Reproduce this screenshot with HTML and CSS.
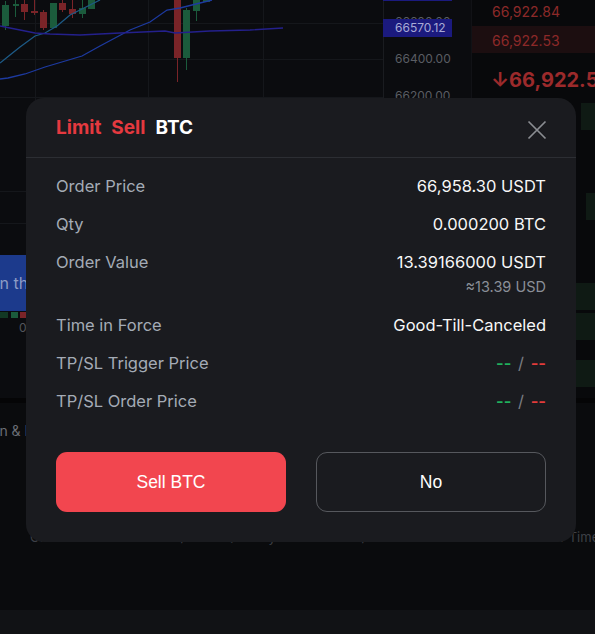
FILE: index.html
```html
<!DOCTYPE html>
<html lang="en">
<head>
    <meta charset="UTF-8">
    <meta name="viewport" content="width=device-width, initial-scale=1.0">
    <title>Confirm Order</title>
    <link rel="stylesheet" href="styles.css">
</head>
<body>
    <div class="app">
        <div class="market">
            <div class="chart">
                <svg class="candles" width="383" height="320" viewBox="0 0 383 320">
                    <g class="grid">
                        <line x1="0" y1="23.5" x2="383" y2="23.5"/>
                        <line x1="0" y1="59.5" x2="383" y2="59.5"/>
                        <line x1="0" y1="97.5" x2="383" y2="97.5"/>
                        <line x1="0" y1="191.5" x2="383" y2="191.5"/>
                        <line x1="0" y1="223.5" x2="383" y2="223.5"/>
                        <line x1="35.5" y1="0" x2="35.5" y2="320"/>
                        <line x1="148.5" y1="0" x2="148.5" y2="320"/>
                        <line x1="263.5" y1="0" x2="263.5" y2="320"/>
                    </g>
                    <g class="up">
                        <line x1="5.5" y1="1" x2="5.5" y2="30"/><rect x="2" y="5" width="7" height="21"/>
                        <line x1="15.5" y1="0" x2="15.5" y2="17"/><rect x="13" y="4" width="6" height="2"/>
                        <rect x="50" y="3" width="7" height="25"/>
                        <line x1="82.5" y1="0" x2="82.5" y2="18"/><rect x="79" y="8" width="7" height="6"/>
                        <rect x="88" y="0" width="7" height="9"/>
                        <line x1="186.5" y1="8" x2="186.5" y2="70"/><rect x="183" y="10" width="7" height="48"/>
                        <line x1="196.5" y1="0" x2="196.5" y2="21"/><rect x="193" y="0" width="7" height="11"/>
                        <rect x="203" y="0" width="7" height="2"/>
                    </g>
                    <g class="down">
                        <line x1="24.5" y1="0" x2="24.5" y2="20"/><rect x="21" y="4" width="7" height="8"/>
                        <line x1="34.5" y1="0" x2="34.5" y2="15"/><rect x="31" y="11" width="7" height="2"/>
                        <line x1="43.5" y1="10" x2="43.5" y2="30"/><rect x="40" y="12" width="7" height="16"/>
                        <line x1="62.5" y1="0" x2="62.5" y2="12"/><rect x="59" y="3" width="7" height="7"/>
                        <line x1="72.5" y1="0" x2="72.5" y2="18"/><rect x="69" y="9" width="7" height="5"/>
                        <line x1="177.5" y1="0" x2="177.5" y2="82"/><rect x="174" y="0" width="7" height="58"/>
                    </g>
                    <polyline class="ma ma-short" points="0,63 10,55 20,47 35,36 45,33 57,26 70,15 90,5 100,0"/>
                    <polyline class="ma ma-mid" points="0,79 8,78 25,74 45,67 82,56 100,46 130,30 150,22 167,10 180,8 200,3 212,0"/>
                    <polyline class="ma ma-long" points="0,26 10,28 35,33 50,34 80,35 120,33 165,31 175,33 210,31 250,30 283,28"/>
                    <rect class="vol-up-dim" x="0" y="312" width="8" height="6"/>
                    <rect class="vol-up" x="11" y="312" width="7" height="6"/>
                    <rect class="vol-down" x="20" y="312" width="6" height="6"/>
                </svg>
                <div class="time-axis">
                    <span>06:00</span>
                    <span>12:00</span>
                    <span>18:00</span>
                </div>
                <div class="banner">Join the community</div>
            </div>
            <div class="price-axis">
                <span class="tick">66600.00</span>
                <span class="tick">66400.00</span>
                <span class="tick">66200.00</span>
                <span class="tick">66000.00</span>
                <span class="mark mark-top">66800.00</span>
                <span class="mark">66570.12</span>
            </div>
            <div class="book">
                <div class="ask">66,922.84</div>
                <div class="ask ask-hl">66,922.53</div>
                <div class="last">&#8595;66,922.53</div>
                <div class="bid"><span class="depth" style="width:22%"></span>66,922.50</div>
                <div class="bid"><span class="depth" style="width:0%"></span>66,922.41</div>
                <div class="bid"><span class="depth" style="width:0%"></span>66,922.40</div>
                <div class="bid"><span class="depth" style="width:18%"></span>66,922.21</div>
                <div class="bid"><span class="depth" style="width:0%"></span>66,922.20</div>
                <div class="bid"><span class="depth" style="width:0%"></span>66,921.97</div>
                <div class="bid"><span class="depth" style="width:30%"></span>66,921.80</div>
                <div class="bid"><span class="depth" style="width:26%"></span>66,921.62</div>
                <div class="bid bid-short"><span class="depth" style="width:0%"></span>66,921.50</div>
                <div class="bid"><span class="depth" style="width:35%"></span>66,921.33</div>
            </div>
        </div>
        <div class="panel">
            <div class="tabs">
                <span class="tab">Position &amp; Info</span>
                <span class="tab">Open Orders</span>
            </div>
            <div class="thead">
                <span>Order Price</span>
                <span>Filled/Order Quantity</span>
                <span>TP/SL</span>
                <span>Order Time</span>
            </div>
        </div>
        <div class="footer"></div>
    </div>

    <div class="overlay">
        <div class="modal">
            <div class="modal-head">
                <div class="title">
                    <span class="side">Limit</span>
                    <span class="side">Sell</span>
                    <span class="coin">BTC</span>
                </div>
                <button class="close" aria-label="Close">
                    <svg width="20" height="20" viewBox="0 0 20 20">
                        <path d="M1.5 1.5 L18.5 18.5 M18.5 1.5 L1.5 18.5"/>
                    </svg>
                </button>
            </div>
            <div class="modal-body">
                <div class="row">
                    <span class="label">Order Price</span>
                    <span class="value">66,958.30 USDT</span>
                </div>
                <div class="row">
                    <span class="label">Qty</span>
                    <span class="value">0.000200 BTC</span>
                </div>
                <div class="row">
                    <span class="label">Order Value</span>
                    <div class="value-group">
                        <span class="value">13.39166000 USDT</span>
                        <span class="sub">&asymp;13.39 USD</span>
                    </div>
                </div>
                <div class="row">
                    <span class="label">Time in Force</span>
                    <span class="value">Good-Till-Canceled</span>
                </div>
                <div class="row">
                    <span class="label">TP/SL Trigger Price</span>
                    <span class="value"><span class="tp">--</span> <span class="slash">/</span> <span class="sl">--</span></span>
                </div>
                <div class="row">
                    <span class="label">TP/SL Order Price</span>
                    <span class="value"><span class="tp">--</span> <span class="slash">/</span> <span class="sl">--</span></span>
                </div>
            </div>
            <div class="modal-actions">
                <button class="btn btn-sell">Sell BTC</button>
                <button class="btn btn-ghost">No</button>
            </div>
        </div>
    </div>
</body>
</html>
```

FILE: styles.css
```css
* {
    box-sizing: border-box;
}
body {
    margin: 0;
    background: #0a0b0d;
    font-family: 'Inter', 'Liberation Sans', Arial, sans-serif;
    overflow: hidden;
}
.app {
    width: 595px;
    height: 634px;
    display: flex;
    flex-direction: column;
}
.market {
    display: grid;
    grid-template-columns: 383px 89px 1fr;
    height: 403px;
    border-bottom: 5px solid #050506;
}
.chart {
    position: relative;
    background: #0b0c0f;
    overflow: hidden;
}
.candles {
    display: block;
}
.grid line {
    stroke: #15171b;
    stroke-width: 1;
}
.up rect, .vol-up {
    fill: #1b5b3c;
}
.up line {
    stroke: #1b5b3c;
}
.down rect, .vol-down {
    fill: #7a2428;
}
.down line {
    stroke: #7a2428;
}
.vol-up-dim {
    fill: #123824;
}
.ma {
    fill: none;
    stroke-width: 1.3;
}
.ma-short { stroke: #1d5a86; }
.ma-mid { stroke: #1d3aa0; }
.ma-long { stroke: #24208c; }
.time-axis {
    display: flex;
    gap: 90px;
    padding-left: 19px;
    font-size: 12px;
    line-height: 16px;
    color: #53565c;
}
.banner {
    position: absolute;
    left: 0;
    top: 255px;
    width: 220px;
    height: 56px;
    background: #1c3a8c;
    color: #8d9cc6;
    font-size: 16px;
    line-height: 56px;
    white-space: nowrap;
    text-indent: -23px;
}
.price-axis {
    position: relative;
    display: flex;
    flex-direction: column;
    padding-top: 3px;
    background: #0b0c0f;
    border-left: 1px solid #1a1c20;
    border-right: 1px solid #111216;
}
.tick {
    height: 37px;
    line-height: 38px;
    padding-left: 11px;
    font-size: 12px;
    color: #5a5d63;
}
.mark {
    position: absolute;
    left: -1px;
    top: 19px;
    width: 69px;
    height: 18px;
    line-height: 18px;
    padding-left: 12px;
    background: #1b1a7e;
    color: #a8aad6;
    font-size: 12px;
}
.mark-top {
    top: -17px;
}
.book {
    background: #08090b;
    font-size: 14px;
}
.ask {
    height: 26px;
    line-height: 24px;
    padding-left: 20px;
    color: #8c2929;
}
.ask-hl {
    height: 27px;
    line-height: 29px;
    background: #1c0e10;
}
.last {
    height: 48px;
    line-height: 55px;
    padding-left: 19px;
    font-size: 20px;
    font-weight: 700;
    color: #9c2a2b;
    white-space: nowrap;
}
.bid {
    position: relative;
    height: 30px;
    line-height: 28px;
    padding-left: 20px;
    color: #1c6a44;
}
.bid-short {
    height: 17px;
}
.depth {
    position: absolute;
    right: 0;
    top: 2px;
    height: 27px;
    background: #0f1a14;
}
.panel {
    flex: 1;
}
.tabs {
    display: flex;
    gap: 24px;
    padding: 18px 0 20px 0;
    font-size: 14px;
    line-height: 20px;
    color: #6a6e75;
    white-space: nowrap;
    margin-left: -45px;
}
.thead {
    display: grid;
    grid-template-columns: 118px 197px 185px 1fr;
    margin-top: 66px;
    padding-left: 30px;
    font-size: 13px;
    line-height: 20px;
    color: #3d4046;
    white-space: nowrap;
}
.footer {
    height: 24px;
    background: #111215;
}

.overlay {
    position: fixed;
    inset: 0;
    padding: 98px 0 0 26px;
}
.modal {
    width: 550px;
    background: #1a1b1f;
    border-radius: 18px;
    padding-bottom: 30px;
}
.modal-head {
    display: flex;
    align-items: flex-start;
    justify-content: space-between;
    padding: 18px 30px 17px 30px;
    border-bottom: 1px solid #2c2e33;
}
.title {
    display: flex;
    gap: 10px;
    font-size: 19px;
    font-weight: 700;
    line-height: 24px;
}
.side {
    color: #e5393f;
}
.coin {
    color: #ffffff;
}
.close {
    display: block;
    margin: 4px -1px 0 0;
    padding: 0;
    background: none;
    border: none;
    cursor: pointer;
}
.close svg {
    display: block;
}
.close path {
    stroke: #8a8d92;
    stroke-width: 1.7;
    fill: none;
}
.modal-body {
    display: flex;
    flex-direction: column;
    gap: 16px;
    padding: 17px 30px 0 30px;
}
.row {
    display: flex;
    justify-content: space-between;
    align-items: flex-start;
    font-size: 16.5px;
    line-height: 22px;
}
.label {
    color: #a4abb6;
}
.value {
    color: #f7f7f7;
}
.value-group {
    display: flex;
    flex-direction: column;
    align-items: flex-end;
}
.sub {
    margin-top: 3px;
    font-size: 14.5px;
    line-height: 22px;
    color: #8a8f98;
}
.tp {
    color: #20b15c;
    font-weight: 600;
}
.sl {
    color: #e33b3b;
    font-weight: 600;
}
.slash {
    color: #7a7d83;
    margin: 0 2px;
}
.modal-actions {
    display: grid;
    grid-template-columns: 1fr 1fr;
    gap: 30px;
    margin-top: 40px;
    padding: 0 30px;
}
.btn {
    height: 60px;
    border-radius: 11px;
    font-family: 'Liberation Sans', Arial, sans-serif;
    font-size: 17.5px;
    color: #ffffff;
    cursor: pointer;
}
.btn-sell {
    background: #f2464f;
    border: none;
}
.btn-ghost {
    background: transparent;
    border: 1px solid #56585d;
}
```
